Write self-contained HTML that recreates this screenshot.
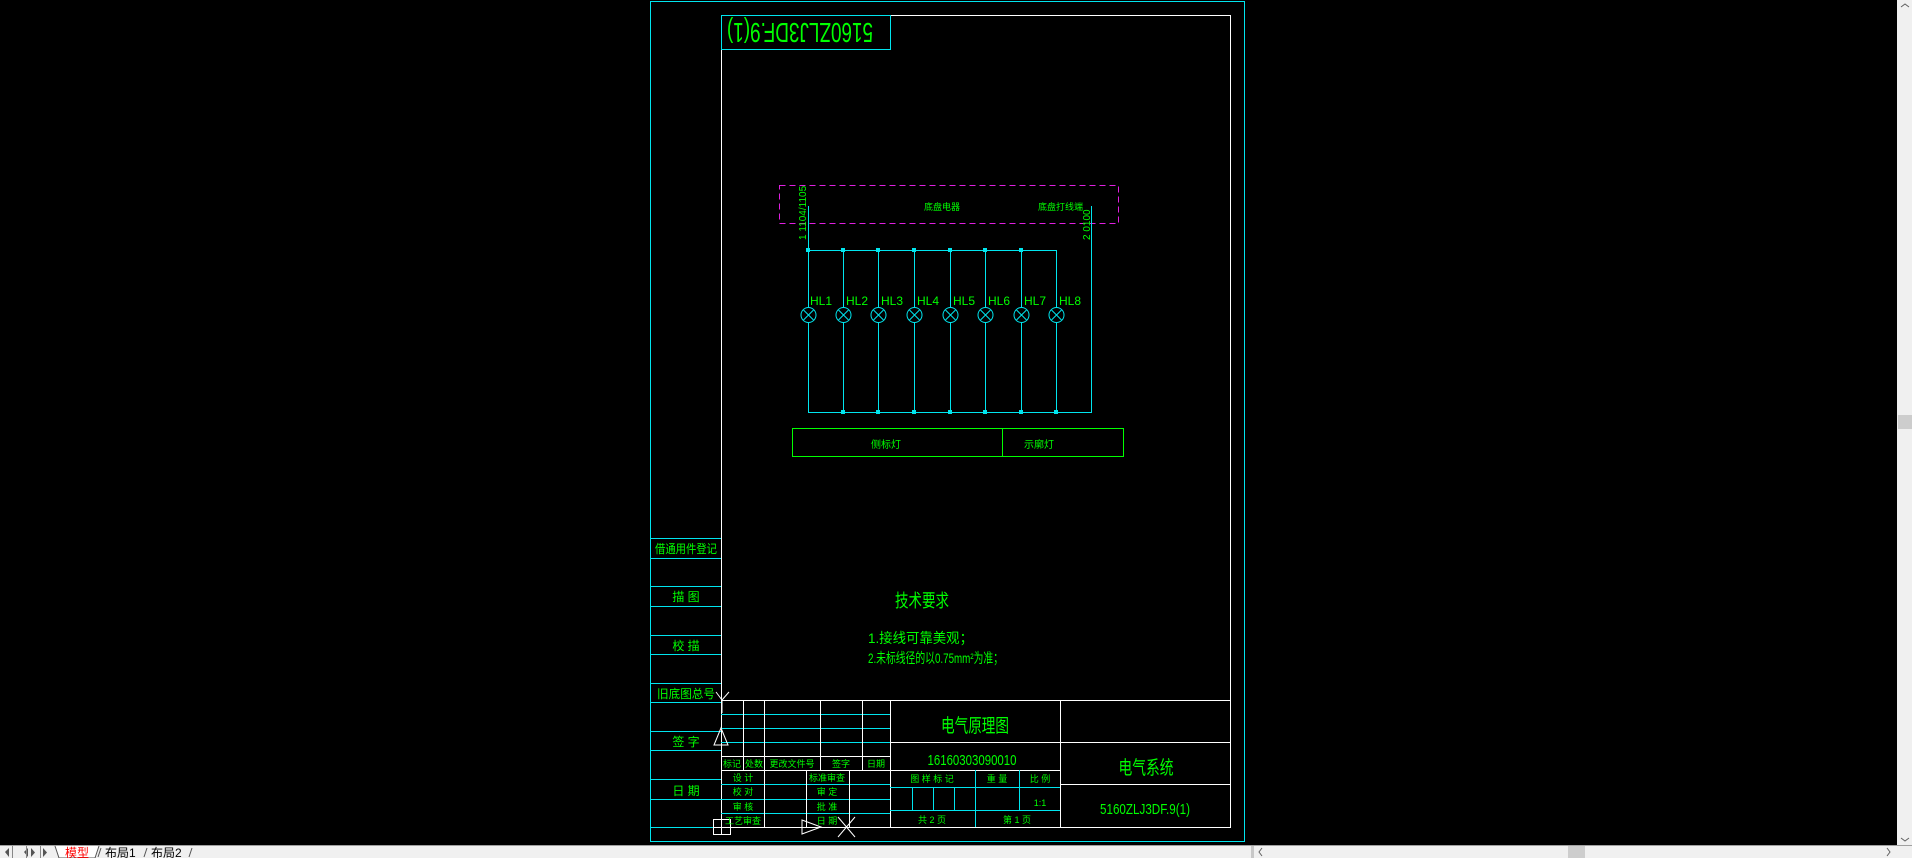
<!DOCTYPE html>
<html><head><meta charset="utf-8"><style>
html,body{margin:0;padding:0;background:#000;width:1912px;height:858px;overflow:hidden}
svg{display:block}
text{font-family:"Liberation Sans","Noto Sans CJK SC",sans-serif;fill:#00ff00}
</style></head><body>
<svg width="1912" height="858" viewBox="0 0 1912 858" xmlns="http://www.w3.org/2000/svg">
<rect width="1912" height="858" fill="#000"/>
<g fill="none" stroke-width="1">
<rect x="650.5" y="1.5" width="594" height="840" stroke="#00e5ee"/>
<rect x="721.5" y="15.5" width="509" height="812" stroke="#fff"/>
<rect x="721.5" y="15.5" width="169" height="34" stroke="#00e5ee"/>
<g stroke="#00e5ee">
<line x1="650" y1="538.5" x2="721" y2="538.5"/><line x1="650" y1="558.5" x2="721" y2="558.5"/>
<line x1="650" y1="586.5" x2="721" y2="586.5"/><line x1="650" y1="606.5" x2="721" y2="606.5"/>
<line x1="650" y1="635.5" x2="721" y2="635.5"/><line x1="650" y1="654.5" x2="721" y2="654.5"/>
<line x1="650" y1="683.5" x2="721" y2="683.5"/><line x1="650" y1="702.5" x2="721" y2="702.5"/>
<line x1="650" y1="731.5" x2="721" y2="731.5"/><line x1="650" y1="750.5" x2="721" y2="750.5"/>
<line x1="650" y1="779.5" x2="721" y2="779.5"/><line x1="650" y1="799.5" x2="721" y2="799.5"/>
<line x1="650" y1="827.5" x2="721" y2="827.5"/>
</g>
<rect x="779.5" y="185.5" width="339" height="38" stroke="#e020e0" stroke-dasharray="6,4"/>
<g stroke="#00e5ee">
<line x1="808.5" y1="206" x2="808.5" y2="412"/>
<line x1="808" y1="250.5" x2="1056" y2="250.5"/>
<line x1="808" y1="412.5" x2="1092" y2="412.5"/>
<line x1="1091.5" y1="206" x2="1091.5" y2="412"/>
<line x1="843.5" y1="250" x2="843.5" y2="412"/>
<line x1="878.5" y1="250" x2="878.5" y2="412"/>
<line x1="914.5" y1="250" x2="914.5" y2="412"/>
<line x1="950.5" y1="250" x2="950.5" y2="412"/>
<line x1="985.5" y1="250" x2="985.5" y2="412"/>
<line x1="1021.5" y1="250" x2="1021.5" y2="412"/>
<line x1="1056.5" y1="250" x2="1056.5" y2="412"/>
</g>
</g>
<g stroke="#00e5ee" fill="#000">
<g transform="translate(808.5,315)"><circle r="7.5"/><path d="M-5-5L5 5M5-5L-5 5"/></g>
<g transform="translate(843.5,315)"><circle r="7.5"/><path d="M-5-5L5 5M5-5L-5 5"/></g>
<g transform="translate(878.5,315)"><circle r="7.5"/><path d="M-5-5L5 5M5-5L-5 5"/></g>
<g transform="translate(914.5,315)"><circle r="7.5"/><path d="M-5-5L5 5M5-5L-5 5"/></g>
<g transform="translate(950.5,315)"><circle r="7.5"/><path d="M-5-5L5 5M5-5L-5 5"/></g>
<g transform="translate(985.5,315)"><circle r="7.5"/><path d="M-5-5L5 5M5-5L-5 5"/></g>
<g transform="translate(1021.5,315)"><circle r="7.5"/><path d="M-5-5L5 5M5-5L-5 5"/></g>
<g transform="translate(1056.5,315)"><circle r="7.5"/><path d="M-5-5L5 5M5-5L-5 5"/></g>
</g>
<g fill="#00e5ee">
<rect x="806" y="248" width="4" height="4"/><rect x="841" y="248" width="4" height="4"/><rect x="876" y="248" width="4" height="4"/><rect x="912" y="248" width="4" height="4"/><rect x="948" y="248" width="4" height="4"/><rect x="983" y="248" width="4" height="4"/><rect x="1019" y="248" width="4" height="4"/>
<rect x="841" y="410" width="4" height="4"/><rect x="876" y="410" width="4" height="4"/><rect x="912" y="410" width="4" height="4"/><rect x="948" y="410" width="4" height="4"/><rect x="983" y="410" width="4" height="4"/><rect x="1019" y="410" width="4" height="4"/><rect x="1054" y="410" width="4" height="4"/>
</g>
<g font-size="12">
<text x="810" y="305">HL1</text><text x="846" y="305">HL2</text><text x="881" y="305">HL3</text><text x="917" y="305">HL4</text><text x="953" y="305">HL5</text><text x="988" y="305">HL6</text><text x="1024" y="305">HL7</text><text x="1059" y="305">HL8</text>
</g>
<text font-size="9" x="924" y="210">底盘电器</text>
<text font-size="9" x="1038" y="210">底盘打线端</text>
<text font-size="10" transform="translate(806,240) rotate(-90)">1  1104/1105</text>
<text font-size="10" transform="translate(1090,240) rotate(-90)">2  0100</text>
<rect x="792.5" y="428.5" width="331" height="28" fill="none" stroke="#00ff00"/>
<line x1="1002.5" y1="428" x2="1002.5" y2="456" stroke="#00ff00"/>
<text font-size="10" x="871" y="448">侧标灯</text>
<text font-size="10" x="1024" y="448">示廓灯</text>
<text font-size="28" transform="translate(873,23) rotate(180)" textLength="146" lengthAdjust="spacingAndGlyphs">5160ZLJ3DF.9(1)</text>
<g font-size="12" text-anchor="middle">
<text x="686" y="553" textLength="62" lengthAdjust="spacingAndGlyphs">借通用件登记</text>
<text x="686" y="601">描    图</text>
<text x="686" y="650">校    描</text>
<text x="686" y="698" textLength="58" lengthAdjust="spacingAndGlyphs">旧底图总号</text>
<text x="686" y="746">签    字</text>
<text x="686" y="795">日    期</text>
</g>
<text font-size="18" x="895" y="607" textLength="54" lengthAdjust="spacingAndGlyphs">技术要求</text>
<text font-size="14" x="868" y="643" textLength="105" lengthAdjust="spacingAndGlyphs">1.接线可靠美观；</text>
<text font-size="14" x="868" y="663" textLength="135" lengthAdjust="spacingAndGlyphs">2.未标线径的以0.75mm²为准；</text>
<g fill="none">
<line x1="721" y1="700.5" x2="1230" y2="700.5" stroke="#fff"/>
<line x1="890.5" y1="700" x2="890.5" y2="827" stroke="#fff"/>
<line x1="1060.5" y1="700" x2="1060.5" y2="827" stroke="#fff"/>
<line x1="890" y1="742.5" x2="1230" y2="742.5" stroke="#fff"/>
<line x1="890" y1="770.5" x2="1060" y2="770.5" stroke="#fff"/>
<line x1="1060" y1="784.5" x2="1230" y2="784.5" stroke="#fff"/>
<line x1="890" y1="787.5" x2="1060" y2="787.5" stroke="#00e5ee"/>
<line x1="890" y1="810.5" x2="1060" y2="810.5" stroke="#00e5ee"/>
<line x1="975.5" y1="770" x2="975.5" y2="827" stroke="#00e5ee"/>
<line x1="1019.5" y1="770" x2="1019.5" y2="810" stroke="#00e5ee"/>
<line x1="912.5" y1="787" x2="912.5" y2="810" stroke="#00e5ee"/>
<line x1="933.5" y1="787" x2="933.5" y2="810" stroke="#00e5ee"/>
<line x1="954.5" y1="787" x2="954.5" y2="810" stroke="#00e5ee"/>
<line x1="721" y1="714.5" x2="890" y2="714.5" stroke="#00e5ee"/>
<line x1="721" y1="728.5" x2="890" y2="728.5" stroke="#00e5ee"/>
<line x1="721" y1="742.5" x2="890" y2="742.5" stroke="#00e5ee"/>
<line x1="721" y1="756.5" x2="890" y2="756.5" stroke="#fff"/>
<line x1="721" y1="770.5" x2="890" y2="770.5" stroke="#fff"/>
<line x1="721" y1="784.5" x2="890" y2="784.5" stroke="#00e5ee"/>
<line x1="721" y1="799.5" x2="890" y2="799.5" stroke="#00e5ee"/>
<line x1="721" y1="813.5" x2="890" y2="813.5" stroke="#00e5ee"/>
<line x1="743.5" y1="700" x2="743.5" y2="770" stroke="#fff"/>
<line x1="764.5" y1="700" x2="764.5" y2="827" stroke="#fff"/>
<line x1="820.5" y1="700" x2="820.5" y2="770" stroke="#fff"/>
<line x1="862.5" y1="700" x2="862.5" y2="770" stroke="#fff"/>
<line x1="806.5" y1="770" x2="806.5" y2="827" stroke="#fff"/>
<line x1="849.5" y1="770" x2="849.5" y2="827" stroke="#fff"/>
<path d="M722 700L716 692M722 700L729 692M722 713V700" stroke="#fff"/>
<path d="M721 728L714 745H728Z" stroke="#fff"/>
<rect x="713.5" y="819.5" width="17" height="15" stroke="#fff"/><line x1="721.5" y1="819" x2="721.5" y2="835" stroke="#fff"/><line x1="713" y1="827.5" x2="731" y2="827.5" stroke="#fff"/>
<path d="M802 820L821 827L802 834Z" stroke="#fff"/>
<path d="M838 817L855 837M855 817L838 837" stroke="#fff"/>
</g>
<text font-size="19" x="975" y="732" text-anchor="middle" textLength="68" lengthAdjust="spacingAndGlyphs">电气原理图</text>
<text font-size="15" x="972" y="765" text-anchor="middle" textLength="89" lengthAdjust="spacingAndGlyphs">16160303090010</text>
<text font-size="19" x="1146" y="774" text-anchor="middle" textLength="55" lengthAdjust="spacingAndGlyphs">电气系统</text>
<text font-size="15" x="1145" y="814" text-anchor="middle" textLength="90" lengthAdjust="spacingAndGlyphs">5160ZLJ3DF.9(1)</text>
<g font-size="9" text-anchor="middle">
<text x="932" y="782">图 样 标 记</text><text x="997" y="782">重  量</text><text x="1040" y="782">比  例</text>
<text x="1040" y="806">1:1</text>
<text x="932" y="823">共  2  页</text><text x="1017" y="823">第  1  页</text>
<text x="732" y="767">标记</text><text x="754" y="767">处数</text><text x="792" y="767">更改文件号</text><text x="841" y="767">签字</text><text x="876" y="767">日期</text>
<text x="743" y="781">设  计</text><text x="827" y="781">标准审查</text>
<text x="743" y="795">校  对</text><text x="827" y="795">审  定</text>
<text x="743" y="810">审  核</text><text x="827" y="810">批  准</text>
<text x="743" y="824">工艺审查</text><text x="827" y="824">日  期</text>
</g>
<rect x="1897" y="0" width="15" height="845" fill="#f0f0f0"/>
<rect x="1898" y="415" width="14" height="14" fill="#cdcdcd"/>
<path d="M1901 7l4-3 4 3M1901 838l4 3 4-3" stroke="#606060" fill="none"/>
<rect x="0" y="845" width="1912" height="13" fill="#f0f0f0"/>
<line x1="0" y1="845.5" x2="1912" y2="845.5" stroke="#a0a0a0"/>
<rect x="1251" y="846" width="3" height="12" fill="#c8c8c8"/>
<rect x="1568" y="846" width="17" height="12" fill="#cdcdcd"/>
<path d="M1262 848l-3 4 3 4M1887 848l3 4-3 4" stroke="#606060" fill="none"/>
<g fill="#555"><path d="M3 848v9M5 852l4-4v9z"/><path d="M24 852l4-4v9z"/><path d="M31 848v9l4-4.5z"/><path d="M43 848v9l4-4.5z"/><path d="M49 848v9"/></g>
<g stroke="#888"><line x1="12.5" y1="846" x2="12.5" y2="858"/><line x1="26.5" y1="846" x2="26.5" y2="858"/><line x1="40.5" y1="846" x2="40.5" y2="858"/></g>
<path d="M55 846l4 12h36l4-12" fill="#fff" stroke="#555"/>
<text x="65" y="857" font-size="12" style="fill:#f00">模型</text>
<text x="105" y="857" font-size="12" style="fill:#000">布局1</text>
<text x="151" y="857" font-size="12" style="fill:#000">布局2</text>
<path d="M98 857l3-9M144 857l3-9M189 857l3-9" stroke="#555"/>
</svg>
</body></html>
